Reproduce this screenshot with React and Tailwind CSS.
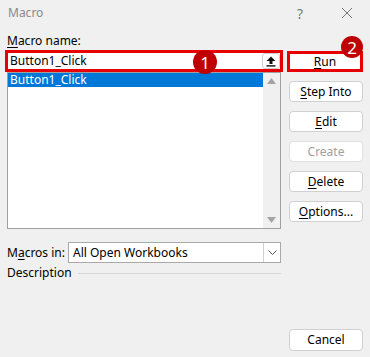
import React from "react";

const U = ({ children }) => <span className="underline underline-offset-2">{children}</span>;

const DlgButton = ({ children, disabled }) => (
  <div
    className={`h-[21px] w-[74px] rounded-[4px] border bg-white flex items-center justify-center leading-none ${
      disabled ? "border-[#e0e0e0] text-[#a0a0a0]" : "border-[#d0d0d0] text-black"
    }`}
  >
    {children}
  </div>
);

const Badge = ({ n, className }) => (
  <div
    className={`absolute rounded-full bg-[#c00000] text-white flex items-center justify-center text-[17px] leading-none ${className}`}
  >
    {n}
  </div>
);

export default function App() {
  return (
    <div className="relative w-[370px] h-[357px] bg-[#f0f0f0] text-[12px] text-black font-['Segoe_UI','Noto_Sans',sans-serif] flex flex-col overflow-hidden">
      {/* title bar */}
      <div className="h-[26px] flex items-center pl-[8px] shrink-0">
        <span className="text-[#8a8a8a] text-[12px]">Macro</span>
        <span className="ml-auto text-[#7a7a7a] text-[14px] mr-[38px]">?</span>
        <svg width="12" height="12" viewBox="0 0 12 12" className="mr-[17px]">
          <path d="M1 1 L11 11 M11 1 L1 11" stroke="#777" strokeWidth="1" />
        </svg>
      </div>

      <div className="flex flex-1 pl-[7px] pb-[6px]">
        {/* left column */}
        <div className="w-[274px] flex flex-col">
          <div className="mt-[8px] h-[14px] leading-[14px]">
            <U>M</U>acro name:
          </div>
          <div className="mt-[5px] mx-[1px] h-[16px] bg-white ring-[3px] ring-[#e60000] flex items-center">
            <span className="pl-[2px]">Button1_Click</span>
            <div className="ml-auto h-[16px] w-[18px] border border-[#cfcfcf] rounded-[3px] bg-white flex items-center justify-center">
              <svg width="10" height="11" viewBox="0 0 10 11">
                <path d="M5 0.5 L9.5 5 L6.5 5 L6.5 8 L3.5 8 L3.5 5 L0.5 5 Z" fill="#111" />
                <rect x="0.5" y="9.2" width="9" height="1.4" fill="#111" />
              </svg>
            </div>
          </div>
          <div className="mt-[3px] h-[157px] border border-[#a0a0a0] bg-white flex">
            <div className="flex-1">
              <div className="h-[14px] bg-[#0078d7] text-white leading-[14px] pl-[2px]">Button1_Click</div>
            </div>
            <div className="w-[17px] bg-[#f0f0f0] flex flex-col items-center justify-between py-[5px]">
              <svg width="9" height="6" viewBox="0 0 9 6">
                <path d="M4.5 0 L9 6 L0 6 Z" fill="#a3a3a3" />
              </svg>
              <svg width="9" height="6" viewBox="0 0 9 6">
                <path d="M0 0 L9 0 L4.5 6 Z" fill="#a3a3a3" />
              </svg>
            </div>
          </div>
          <div className="mt-[13px] flex items-center">
            <span className="w-[61px]">
              M<U>a</U>cros in:
            </span>
            <div className="flex-1 h-[21px] bg-white border border-[#a9a9a9] flex items-center">
              <span className="pl-[4px]">All Open Workbooks</span>
              <div className="ml-auto h-full w-[17px] border-l border-[#d0d0d0] flex items-center justify-center">
                <svg width="9" height="5" viewBox="0 0 9 5">
                  <path d="M0.5 0.5 L4.5 4.5 L8.5 0.5" stroke="#555" fill="none" strokeWidth="1" />
                </svg>
              </div>
            </div>
          </div>
          <div className="mt-[3px] flex items-center h-[14px]">
            <span>Description</span>
            <div className="flex-1 ml-[6px] h-px bg-[#d8d8d8]" />
          </div>
        </div>

        {/* right column */}
        <div className="ml-[8px] flex flex-col">
          <div className="mt-[25px] -ml-[2px] h-[21px] w-[76px] border-[3px] border-[#e60000] bg-white flex items-center justify-center leading-none">
            <U>R</U>un
          </div>
          <div className="mt-[9px] flex flex-col gap-[9px]">
            <DlgButton>
              <U>S</U>tep Into
            </DlgButton>
            <DlgButton>
              <U>E</U>dit
            </DlgButton>
            <DlgButton disabled>Create</DlgButton>
            <DlgButton>
              <U>D</U>elete
            </DlgButton>
            <DlgButton>
              <U>O</U>ptions...
            </DlgButton>
          </div>
          <div className="mt-auto">
            <div className="h-[22px] w-[74px] rounded-[4px] border border-[#d0d0d0] bg-white flex items-center justify-center">
              Cancel
            </div>
          </div>
        </div>
      </div>

      <Badge n="1" className="left-[193px] top-[50px] w-[24px] h-[24px]" />
      <Badge n="2" className="left-[341px] top-[36px] w-[22px] h-[22px]" />
    </div>
  );
}
